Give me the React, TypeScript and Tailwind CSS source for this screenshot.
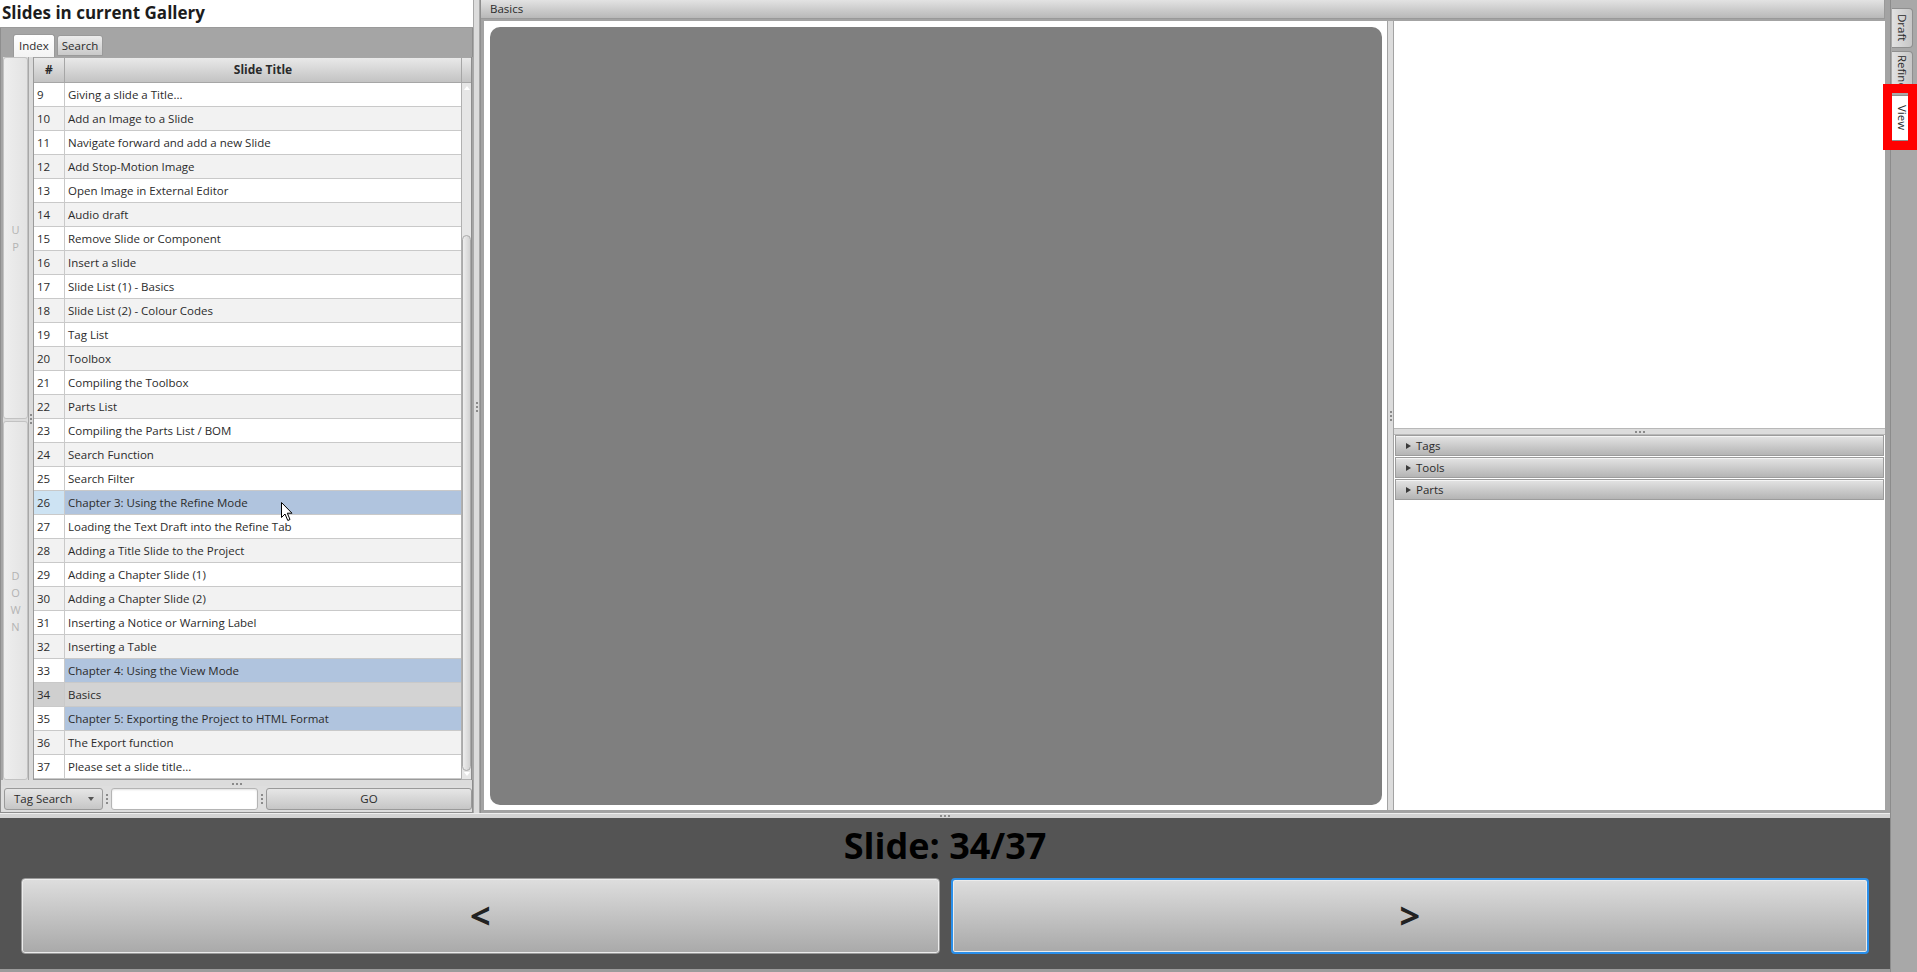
import React from "react";

const rows: [number, string][] = [
  [9, "Giving a slide a Title..."],
  [10, "Add an Image to a Slide"],
  [11, "Navigate forward and add a new Slide"],
  [12, "Add Stop-Motion Image"],
  [13, "Open Image in External Editor"],
  [14, "Audio draft"],
  [15, "Remove Slide or Component"],
  [16, "Insert a slide"],
  [17, "Slide List (1) - Basics"],
  [18, "Slide List (2) - Colour Codes"],
  [19, "Tag List"],
  [20, "Toolbox"],
  [21, "Compiling the Toolbox"],
  [22, "Parts List"],
  [23, "Compiling the Parts List / BOM"],
  [24, "Search Function"],
  [25, "Search Filter"],
  [26, "Chapter 3: Using the Refine Mode"],
  [27, "Loading the Text Draft into the Refine Tab"],
  [28, "Adding a Title Slide to the Project"],
  [29, "Adding a Chapter Slide (1)"],
  [30, "Adding a Chapter Slide (2)"],
  [31, "Inserting a Notice or Warning Label"],
  [32, "Inserting a Table"],
  [33, "Chapter 4: Using the View Mode"],
  [34, "Basics"],
  [35, "Chapter 5: Exporting the Project to HTML Format"],
  [36, "The Export function"],
  [37, "Please set a slide title..."],
];

const chapters = new Set([26, 33, 35]);

function HGrip() {
  return (
    <div className="flex gap-[2px]">
      <div className="w-[2px] h-[2px] bg-[#8a8a8a]" />
      <div className="w-[2px] h-[2px] bg-[#8a8a8a]" />
      <div className="w-[2px] h-[2px] bg-[#8a8a8a]" />
    </div>
  );
}

function VGrip() {
  return (
    <div className="flex flex-col gap-[2px]">
      <div className="w-[2px] h-[2px] bg-[#8a8a8a]" />
      <div className="w-[2px] h-[2px] bg-[#8a8a8a]" />
      <div className="w-[2px] h-[2px] bg-[#8a8a8a]" />
    </div>
  );
}

function Row({ n, title }: { n: number; title: string }) {
  const base = n % 2 === 1 ? "bg-white" : "bg-[#f2f2f2]";
  let numBg = base;
  let titleBg = base;
  if (chapters.has(n)) {
    titleBg = "bg-[#b0c4de]";
    if (n === 26) numBg = "bg-[#cde3f3]";
  }
  if (n === 34) {
    numBg = "bg-[#cfcfcf]";
    titleBg = "bg-[#d3d3d3]";
  }
  return (
    <div className="flex h-[24px] border-b border-[#c9c9c9] text-[11.5px] leading-[24px]">
      <div className={`w-[31px] shrink-0 pl-[3px] border-r border-[#c9c9c9] ${numBg}`}>{n}</div>
      <div className={`flex-1 pl-[3px] whitespace-nowrap overflow-hidden ${titleBg}`}>{title}</div>
    </div>
  );
}

function StripButton({ letters, className }: { letters: string[]; className: string }) {
  return (
    <div
      className={`flex flex-col items-center justify-center rounded-[3px] border border-[#c2c2c2] bg-linear-to-r from-[#eeeeee] to-[#e3e3e3] text-[11px] leading-[17px] text-[#b3b3b3] ${className}`}
    >
      {letters.map((l, i) => (
        <span key={i}>{l}</span>
      ))}
    </div>
  );
}

function LeftPanel() {
  return (
    <div className="w-[473px] shrink-0 flex flex-col bg-[#a5a5a5]">
      <div className="h-[28px] bg-white border-b border-[#9a9a9a] pl-[2px] text-[17px] font-bold leading-[26px] text-[#1c1c1c] whitespace-nowrap">
        Slides in current Gallery
      </div>
      <div className="h-[29px] flex items-end pl-[12px] gap-[2px] border-x border-[#8e8e8e]">
        <div className="h-[23px] px-[5px] rounded-t-[3px] border border-b-0 border-[#9a9a9a] bg-linear-to-b from-white to-[#f3f3f3] text-[11.5px] leading-[21px]">
          Index
        </div>
        <div className="h-[21px] mb-[1px] px-[4px] rounded-t-[3px] border border-[#9a9a9a] bg-linear-to-b from-[#ededed] to-[#c9c9c9] text-[11.5px] leading-[19px]">
          Search
        </div>
      </div>
      <div className="h-[723px] flex">
        <div className="w-[3px] bg-[#a5a5a5] border-l border-[#8e8e8e]" />
        <div className="w-[25px] flex flex-col gap-[2px] bg-[#dcdcdc]">
          <StripButton letters={["U", "P"]} className="h-[362px]" />
          <StripButton letters={["D", "O", "W", "N"]} className="flex-1" />
        </div>
        <div className="w-[5px] flex items-center justify-center bg-[#dadada] border-l border-[#a8a8a8]">
          <VGrip />
        </div>
        <div className="w-[428px] flex flex-col border-l border-b border-[#9a9a9a] bg-white">
          <div className="h-[26px] flex bg-linear-to-b from-[#e9e9e9] to-[#c3c3c3] border-y border-[#a6a6a6] text-[12px] font-bold leading-[24px] text-[#2a2a2a]">
            <div className="w-[31px] shrink-0 text-center border-r border-[#a6a6a6]">#</div>
            <div className="flex-1 text-center">Slide Title</div>
          </div>
          {rows.map(([n, t]) => (
            <Row key={n} n={n} title={t} />
          ))}
        </div>
        <div className="w-[11px] flex flex-col border-r border-[#8e8e8e] bg-[#e2e2e2]">
          <div className="h-[26px] bg-linear-to-b from-[#e9e9e9] to-[#c3c3c3] border-y border-l border-[#a6a6a6]" />
          <div className="relative flex-1 border-l border-b border-[#b0b0b0] bg-[#e6e6e6]">
            <div className="absolute left-[2px] top-[3px] w-0 h-0 border-l-[3px] border-r-[3px] border-b-[4px] border-l-transparent border-r-transparent border-b-[#ffffff]" />
            <div className="absolute left-[0px] top-[152px] w-[9px] h-[536px] rounded-[5px] border border-[#a9a9a9] bg-linear-to-r from-[#eeeeee] to-[#d2d2d2]" />
            <div className="absolute left-[2px] bottom-[3px] w-0 h-0 border-l-[3px] border-r-[3px] border-t-[4px] border-l-transparent border-r-transparent border-t-[#ffffff]" />
          </div>
        </div>
      </div>
      <div className="h-[6px] flex items-center justify-center bg-[#dcdcdc] border-x border-[#8e8e8e] pt-[1px]">
        <HGrip />
      </div>
      <div className="h-[26px] flex items-center pl-[3px] bg-[#dedede] border-x border-[#8e8e8e] text-[11.5px]">
        <div className="w-[99px] h-[22px] flex items-center justify-between pl-[9px] pr-[8px] rounded-[3px] border border-[#9a9a9a] bg-linear-to-b from-[#e6e6e6] to-[#c6c6c6]">
          <span>Tag Search</span>
          <span className="w-0 h-0 border-l-[3px] border-r-[3px] border-t-[4px] border-l-transparent border-r-transparent border-t-[#555]" />
        </div>
        <div className="w-[8px] flex justify-center">
          <VGrip />
        </div>
        <div className="w-[147px] h-[22px] rounded-[3px] border border-[#b4b4b4] bg-white shadow-[inset_0_1px_2px_rgba(0,0,0,0.12)]" />
        <div className="w-[8px] flex justify-center">
          <VGrip />
        </div>
        <div className="w-[206px] h-[22px] flex items-center justify-center rounded-[3px] border border-[#9a9a9a] bg-linear-to-b from-[#e6e6e6] to-[#c6c6c6]">
          GO
        </div>
      </div>
      <div className="h-[1px] bg-[#8e8e8e]" />
    </div>
  );
}

function Accordion({ label }: { label: string }) {
  return (
    <div className="h-[21px] flex items-center pl-[10px] border border-[#9c9c9c] bg-linear-to-b from-[#e4e4e4] to-[#b4b4b4] shadow-[inset_0_1px_0_#f4f4f4] text-[11.5px]">
      <span className="w-0 h-0 border-t-[3.5px] border-b-[3.5px] border-l-[5px] border-t-transparent border-b-transparent border-l-[#3a3a3a]" />
      <span className="ml-[5px]">{label}</span>
    </div>
  );
}

function Center() {
  return (
    <div className="flex-1 flex flex-col bg-[#a3a3a3] border-l border-[#8e8e8e]">
      <div className="h-[19px] mr-[5px] pl-[9px] bg-linear-to-b from-[#e3e3e3] to-[#b8b8b8] border-b border-r border-[#999999] text-[11.5px] leading-[18px]">
        Basics
      </div>
      <div className="flex-1 flex pl-[3px] pr-[5px] pb-[3px] pt-[2px]">
        <div className="w-[903px] bg-white pl-[6px] pr-[5px] pt-[6px] pb-[5px]">
          <div className="w-full h-full rounded-[10px] bg-[#7f7f7f]" />
        </div>
        <div className="w-[7px] flex items-center justify-center bg-[#dcdcdc] border-x border-[#a3a3a3]">
          <VGrip />
        </div>
        <div className="flex-1 flex flex-col bg-white">
          <div className="h-[407px]" />
          <div className="h-[7px] flex items-center justify-center bg-[#dcdcdc] border-y border-[#b8b8b8]">
            <HGrip />
          </div>
          <div className="flex flex-col gap-[1px] px-[1px]">
            <Accordion label="Tags" />
            <Accordion label="Tools" />
            <Accordion label="Parts" />
          </div>
          <div className="flex-1" />
        </div>
      </div>
    </div>
  );
}

function Bottom() {
  return (
    <div className="h-[154px] flex flex-col bg-[#545454]">
      <div className="pt-[8px] h-[48px] text-center text-[36px] font-bold leading-[40px] text-black">
        Slide: 34/37
      </div>
      <div className="mt-[12px] h-[76px] grid grid-cols-2 gap-[11px] px-[21px]">
        <div className="flex items-center justify-center rounded-[4px] border border-[#9a9a9a] bg-linear-to-b from-[#dedede] to-[#a9a9a9] shadow-[inset_0_0_0_1px_#ececec] text-[36px] font-bold text-[#222]">
          &lt;
        </div>
        <div className="flex items-center justify-center rounded-[4px] border-2 border-[#2a8fea] bg-linear-to-b from-[#dedede] to-[#a9a9a9] shadow-[inset_0_0_0_1px_#ececec] text-[36px] font-bold text-[#222]">
          &gt;
        </div>
      </div>
      <div className="flex-1" />
      <div className="h-[3px] bg-[#9b9b9b]" />
    </div>
  );
}

function SideTab({ label, h, selected }: { label: string; h: number; selected?: boolean }) {
  return (
    <div
      style={{ height: h }}
      className={`w-[21px] flex items-center justify-center rounded-r-[4px] border border-l-0 border-[#8f8f8f] text-[11.5px] [writing-mode:vertical-rl] ${
        selected ? "bg-white" : "bg-linear-to-r from-[#e2e2e2] to-[#c6c6c6]"
      }`}
    >
      {label}
    </div>
  );
}

export default function App() {
  return (
    <div className="relative flex w-[1917px] h-[972px] overflow-hidden bg-[#a8a8a8] text-[#2b2b2b] [font-family:'Open_Sans',sans-serif]">
      <div className="w-[1890px] shrink-0 flex flex-col h-full">
        <div className="h-[813px] flex">
          <LeftPanel />
          <div className="w-[7px] flex items-center justify-center bg-[#dcdcdc] border-x border-[#a8a8a8]">
            <VGrip />
          </div>
          <Center />
        </div>
        <div className="h-[5px] flex items-center justify-center bg-[#d4d4d4] border-t border-[#efefef]">
          <HGrip />
        </div>
        <Bottom />
      </div>
      <div className="flex-1 flex flex-col gap-[3px] pt-[8px] pl-[1px] bg-[#a8a8a8] border-l border-[#8c8c8c]">
        <SideTab label="Draft" h={40} />
        <SideTab label="Refine" h={41} />
        <SideTab label="View" h={46} selected />
      </div>
      <div className="absolute left-[1883px] top-[84px] w-[34px] h-[66px] border-[9px] border-[#ff0000]" />
      <svg className="absolute left-[281px] top-[502px]" width="13" height="20" viewBox="0 0 13 20">
        <path d="M0.5 0.5 L0.5 15.5 L4 12 L6.8 18.5 L9 17.5 L6.3 11.2 L11 11.2 Z" fill="#ffffff" stroke="#000000" strokeWidth="1" strokeLinejoin="miter" />
      </svg>
    </div>
  );
}
